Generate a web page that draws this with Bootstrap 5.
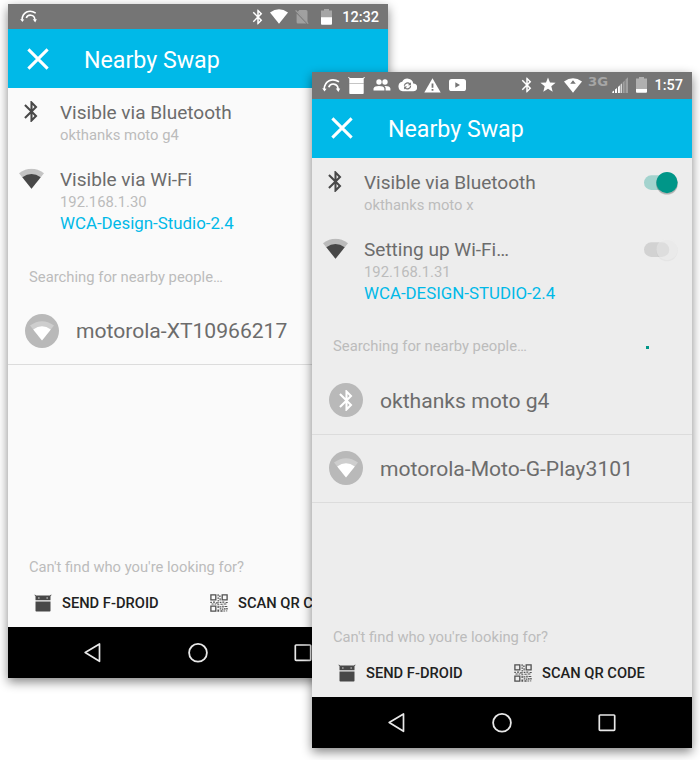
<!DOCTYPE html>
<html lang="en">
<head>
<meta charset="utf-8">
<title>Nearby Swap</title>
<link href="https://cdn.jsdelivr.net/npm/bootstrap@5.3.0/dist/css/bootstrap.min.css" rel="stylesheet">
<style>
body{font-family:Roboto,sans-serif;width:700px;height:760px;overflow:hidden;background:#fff;line-height:1}
svg{display:block;flex:none}
.phone{width:380px;box-shadow:0 4px 10px rgba(0,0,0,.48)}
.phone-a{left:8px;top:4px;height:674px;background:#fafafa}
.phone-b{left:312px;top:72px;height:676px;background:#ededed}
.status{background:#757575;color:#fff;height:25.3px}
.phone-b .status{height:26.8px}
.status-end{padding-right:9px}
.status-start{padding-left:7px}
.clock{font-size:14.5px;font-weight:500;margin-left:1.5px;padding-top:2.500px}
.phone-a .clock{margin-left:4px}
.cell{display:flex;justify-content:center;flex:none}
.w20{width:20px}.w21{width:21px}.w23{width:23px}.w25{width:25.2px}.w26{width:26px}.w28{width:28px}
.net{font:700 12px/1 "DejaVu Sans",sans-serif;color:#a6a6a6;padding-bottom:7px}
.net b{transform:scaleX(1.1)}
.appbar{background:#00b9e8;height:59.2px;padding-left:19px;color:#fff}
.appbar h1{font-size:23.2px;font-weight:400;margin:3px 0 0 35px;line-height:1}
.setting{padding-left:11px}
.setting .ico{width:25px;margin-right:16px}
.bt-row{height:67px;padding-top:11px}
.wifi-row{height:89px;padding-top:11px}
.name{font-size:19.05px;line-height:27px;color:#6c6c6c}
.detail{font-size:14.8px;line-height:18px;color:#bcbcbc}
.ssid{font-size:16.85px;line-height:25px;color:#00b9e8}
.hint{font-size:14.82px;line-height:20px;color:#bcbcbc;padding-left:21px}
.search{height:52.6px;padding-top:22.4px}
.mt-auto.hint{font-size:14.75px}
.peer{height:68.2px;border-bottom:1px solid #dcdcdc;padding-left:17px}
.peer .who{font-size:21.1px;color:#6c6c6c;margin-left:17px}
.disc{width:34px;height:34px;background:#b9b9b9}
.act{font-size:14.7px;font-weight:500;color:#212121;margin-left:10px;padding-top:1px}
.acts{height:50px;padding-left:26px;padding-top:1px}
.acts .one{width:176px}
.navkeys{background:#000;height:50.7px;padding:0 75px 0 75px}
.toggle{right:14px;width:36px;height:26px}
.dot{right:43px;top:32.2px;width:3px;height:3px;background:#009688}
</style>
<script src="https://cdn.jsdelivr.net/npm/bootstrap@5.3.0/dist/js/bootstrap.bundle.min.js"></script>
</head>
<body class="position-relative">
<svg width="0" height="0" class="position-absolute" aria-hidden="true">
  <symbol id="bt" viewBox="0 0 24 24"><path fill="currentColor" d="M17.71 7.71L12 2h-1v7.59L6.41 5 5 6.41 10.59 12 5 17.59 6.41 19 11 14.41V22h1l5.71-5.71-4.3-4.29 4.3-4.29zM13 5.83l1.88 1.88L13 9.59V5.83zm1.88 10.46L13 18.17v-3.76l1.88 1.88z"/></symbol>
  <symbol id="wifi" viewBox="0 0 24 20"><path fill="currentColor" opacity=".3" d="M0 4.5Q12-4 24 4.5L12 19.5z"/><path fill="currentColor" d="M3.2 8.4Q12 2 20.8 8.4L12 19.5z"/></symbol>
  <symbol id="swap" viewBox="18 8 20 17"><g fill="none" stroke="#fff" stroke-width="1.7"><path d="M20.2 20C20.6 12 28 8.3 35 12.8"/><path d="M24.8 18.2C26 13.8 33.8 13.6 34.1 20"/></g><path fill="#fff" d="M18.2 19.3l4.4.4-2.1 2.8zM31.8 19.6h4.4l-1.8 3.4z"/></symbol>
  <symbol id="cross" viewBox="0 0 24 24"><path d="M1.500 1.500l21 21M22.500 1.500L1.500 22.500" stroke="#fff" stroke-width="3.300"/></symbol>
  <symbol id="droid" viewBox="0 0 18 18"><path fill="currentColor" fill-rule="evenodd" d="M.8.6l1.3 1h13.8l1.3-1 .3.4-1 1.2v4H1.5v-4L.5 1zM4.2 3.5v1.1h1.3V3.5zm8.3 0v1.1h1.3V3.5zM1.5 7.4h15v9.3q0 .8-.8.8H2.3q-.8 0-.8-.8z"/></symbol>
  <symbol id="qr" viewBox="0 0 18 18"><g fill="none" stroke="#4f4f4f" stroke-width="1.3"><path d="M.9.9h4.9v4.9H.9zM12.2.9h4.9v4.9h-4.9zM.9 12.2h4.9v4.9H.9z"/></g><path fill="#555" d="M7.5.3h1.2v2H7.5zM9.2 1.5h1.4v1.6H9.2zM7.4 3.4h1.7v1.4H7.4zM9.5 4.3h1.2v2.3H9.5zM7.6 6h1.2v1.6H7.6zM.3 7.8h1.6v1.1H.3zM3 7.6h2.1v1.2H3zM6 8.2h2.8v1.3H6zM9.7 7.8h1.7v1.3H9.7zM12.3 7.6h2v1.2h-2zM15.6 7.9h2.1v1.1h-2.1zM1.5 9.5h2.2v1H1.5zM4.6 9.4h1.5v1.2H4.6zM7.3 10.2h2v1h-2zM10.4 9.7h2.3v1.1h-2.3zM13.6 9.5h2.8v1.1h-2.8zM7.5 12h1.3v2H7.5zM9.4 12.3h2v1.2h-2zM12.2 11.7h1.5v1.8h-1.5zM14.5 12h2.8v1.1h-2.8zM9.8 14.3h1.4v1.3H9.8zM7.4 15.4h1.8v2.3H7.4zM11.8 14.4h1.6v1.4h-1.6zM14.2 14h1.3v1.8h-1.3zM16.2 14h1.5v1.6h-1.5zM10.4 16.3h2.2v1.4h-2.2zM13.4 16.4h1.8v1.2h-1.8zM16.3 16.3h.9v1.1h-.9z"/></symbol>
  <symbol id="back" viewBox="0 0 20 20"><path d="M2.200 9.500L16.500.900v17.400z" fill="none" stroke="#e8e8e8" stroke-width="1.7" stroke-linejoin="round"/></symbol>
  <symbol id="home" viewBox="0 0 20 20"><circle cx="10" cy="9.800" r="8.9" fill="none" stroke="#e8e8e8" stroke-width="1.8"/></symbol>
  <symbol id="recent" viewBox="0 0 20 20"><rect x="2.3" y="2" width="15.4" height="15.4" rx=".8" fill="none" stroke="#e8e8e8" stroke-width="1.7"/></symbol>
</svg>

<section class="phone phone-a position-absolute d-flex flex-column">
  <div class="status d-flex align-items-center justify-content-between">
    <div class="d-flex status-start ps-2 ms-1"><svg width="18.500" height="17"><use href="#swap"/></svg></div>
    <div class="status-end d-flex align-items-center">
      <span class="cell w23"><svg width="18" height="18"><use href="#bt"/></svg></span>
      <span class="cell w20"><svg width="18" height="15" viewBox="0 0 18 15"><path fill="#fff" d="M0 3.5Q9-3 18 3.5L9 14.7z"/></svg></span>
      <span class="cell w26"><svg width="14" height="16" viewBox="0 0 14 16"><path fill="#a0a0a0" d="M4.3 1H11q1.5 0 1.5 1.5v11L2.6 3zM1.6 4.6l9.8 10H3q-1.4 0-1.4-1.4z"/><path d="M.6 1.3l12.6 13.3" stroke="#a0a0a0" stroke-width="1.2"/></svg></span>
      <span class="cell w23"><svg width="11" height="16" viewBox="0 0 11 16"><path fill="#a6a6a6" d="M3 0h5v1.6h3V9H0V1.6h3z"/><path fill="#fff" d="M0 8.3h11v6.5q0 .9-.9.9H.9q-.9 0-.9-.9z"/></svg></span>
      <span class="clock">12:32</span>
    </div>
  </div>
  <header class="appbar d-flex align-items-center"><svg width="22" height="22"><use href="#cross"/></svg><h1>Nearby Swap</h1></header>
  <div class="setting bt-row d-flex">
    <div class="ico"><svg width="25" height="25" color="#484848"><use href="#bt"/></svg></div>
    <div><div class="name">Visible via Bluetooth</div><div class="detail">okthanks moto g4</div></div>
  </div>
  <div class="setting wifi-row d-flex">
    <div class="ico"><svg width="25" height="25" viewBox="0 -2.4 24 24" color="#484848"><use href="#wifi" width="24" height="20"/></svg></div>
    <div><div class="name">Visible via Wi-Fi</div><div class="detail">192.168.1.30</div><div class="ssid">WCA-Design-Studio-2.4</div></div>
  </div>
  <div class="hint search">Searching for nearby people…</div>
  <div class="peer d-flex align-items-center">
    <div class="disc rounded-circle d-flex align-items-center justify-content-center text-white"><svg width="24" height="20"><use href="#wifi"/></svg></div>
    <span class="who">motorola-XT10966217</span>
  </div>
  <div class="hint mt-auto">Can't find who you're looking for?</div>
  <div class="acts d-flex align-items-center">
    <div class="one d-flex align-items-center"><svg width="18" height="18" color="#484848"><use href="#droid"/></svg><span class="act">SEND F-DROID</span></div>
    <div class="d-flex align-items-center"><svg width="18" height="18"><use href="#qr"/></svg><span class="act">SCAN QR CODE</span></div>
  </div>
  <nav class="navkeys d-flex align-items-center justify-content-between"><svg width="20" height="20"><use href="#back"/></svg><svg width="20" height="20"><use href="#home"/></svg><svg width="20" height="20"><use href="#recent"/></svg></nav>
</section>

<section class="phone phone-b position-absolute d-flex flex-column">
  <div class="status d-flex align-items-center justify-content-between">
    <div class="status-start d-flex align-items-center">
      <span class="cell w25"><svg width="20" height="17"><use href="#swap"/></svg></span>
      <span class="cell w25"><svg width="17" height="17" viewBox="0 0 17 17"><path fill="#fff" d="M.5 0l1.7 1h12.6l1.7-1 .5.6-1.3 1.2v4.4H1.3V1.8L0 .6zM1.3 6.8h14.4v9.4q0 .8-.8.8H2.1q-.8 0-.8-.8z"/><path stroke="#ccc" stroke-width=".6" d="M1.3 6.5h14.4"/></svg></span>
      <span class="cell w25"><svg width="18" height="12" viewBox="0 0 18 12"><g fill="#fff"><circle cx="6" cy="3" r="2.7"/><circle cx="12" cy="3" r="2.7"/><path d="M.5 11.5V9.4Q1.5 7 6 7t5.4 2.4v2.1zM12.6 11.5V9q-.3-1.2-1.3-1.9Q16.500 6.800 17.400 9.400v2.100z"/></g></svg></span>
      <span class="cell w25"><svg width="19" height="14" viewBox="0 0 24 17"><path fill="#fff" d="M19.300 6.500A7.500 7.500 0 0 0 5.300 4.500 6.100 6.100 0 0 0 6 16.500h13a5 5 0 0 0 .3-10z"/><path fill="none" stroke="#757575" stroke-width="1.500" d="M8 9.500a4 4 0 0 1 7-2.200M16 9.500a4 4 0 0 1-7 2.500"/><path fill="#757575" d="M16.300 5v3.800h-3.800zM7.700 14.200v-3.800h3.800z"/></svg></span>
      <span class="cell w25"><svg width="17" height="15" viewBox="0 0 17 15"><path fill="#fff" d="M8.500.3L16.700 14.500H.3z"/><path fill="#757575" d="M7.600 5.500h1.800v4.200H7.600zm0 5.500h1.800v1.800H7.600z"/></svg></span>
      <span class="cell w25"><svg width="17" height="12" viewBox="0 0 17 12"><rect width="17" height="12" rx="2.600" fill="#fff"/><path fill="#757575" d="M6.300 3.300v5.400L11 6z"/></svg></span>
    </div>
    <div class="status-end d-flex align-items-center">
      <span class="cell w21"><svg width="18" height="18"><use href="#bt"/></svg></span>
      <span class="cell w21"><svg width="16" height="16" viewBox="0 0 16 16"><path fill="#fff" d="M8 .5l2 5 5.600.300-4.300 3.500 1.400 5.500L8 11.800l-4.700 3 1.400-5.500L.4 5.800 6 5.500z"/></svg></span>
      <span class="cell w28"><svg width="18" height="15" viewBox="0 0 18 15"><path fill="#fff" d="M0 3.500Q9-3 18 3.500L9 14.700z"/><path fill="#757575" d="M9 2.200l2.800 3.600H6.200z"/></svg></span>
      <span class="cell w23 net"><b>3G</b></span>
      <span class="cell w20"><svg width="16" height="16" viewBox="0 0 16 16"><path fill="#fff" d="M.3 16v-1.200l1.700-1.300V16zM3 16v-3.500l2-1.600V16zM6 16V9.900l1.900-1.600V16z"/><path fill="#d8d8d8" d="M8.500 16V7.700L10 6.200V16z"/><path fill="#a0a0a0" d="M10.700 16V5.400l2-2V16zM13.500 16V2.500L16 .3V16z"/></svg></span>
      <span class="cell w23"><svg width="11" height="16" viewBox="0 0 11 16"><path fill="#b0b0b0" d="M3 0h5v1.600h3V12H0V1.600h3z"/><path fill="#fff" d="M0 12h11v2.800q0 .9-.9.900H.9q-.9 0-.9-.9z"/></svg></span>
      <span class="clock">1:57</span>
    </div>
  </div>
  <header class="appbar d-flex align-items-center"><svg width="22" height="22"><use href="#cross"/></svg><h1>Nearby Swap</h1></header>
  <div class="setting bt-row d-flex position-relative">
    <div class="ico"><svg width="25" height="25" color="#484848"><use href="#bt"/></svg></div>
    <div><div class="name">Visible via Bluetooth</div><div class="detail">okthanks moto x</div></div>
    <svg class="toggle position-absolute" viewBox="0 0 36 26"><rect x="2" y="6.300" width="27" height="14.700" rx="7.300" fill="#a3d3ce"/><circle cx="25" cy="15" r="10.800" fill="#000" opacity=".12"/><circle cx="25" cy="14.500" r="10.800" fill="#000" opacity=".15"/><circle cx="25" cy="13.600" r="10.600" fill="#009688"/></svg>
  </div>
  <div class="setting wifi-row d-flex position-relative">
    <div class="ico"><svg width="25" height="25" viewBox="0 -2.4 24 24" color="#484848"><use href="#wifi" width="24" height="20"/></svg></div>
    <div><div class="name">Setting up Wi-Fi…</div><div class="detail">192.168.1.31</div><div class="ssid">WCA-DESIGN-STUDIO-2.4</div></div>
    <svg class="toggle position-absolute" viewBox="0 0 36 26"><rect x="2" y="6.300" width="25.300" height="14.700" rx="7.300" fill="#d2d2d2"/><circle cx="25" cy="14.500" r="10.800" fill="#000" opacity=".03"/><circle cx="25" cy="13.600" r="10.600" fill="#f0f0f0" opacity=".5"/></svg>
  </div>
  <div class="hint search position-relative">Searching for nearby people…<i class="dot position-absolute"></i></div>
  <div class="peer d-flex align-items-center">
    <div class="disc rounded-circle d-flex align-items-center justify-content-center text-white"><svg width="25" height="25"><use href="#bt"/></svg></div>
    <span class="who">okthanks moto g4</span>
  </div>
  <div class="peer d-flex align-items-center">
    <div class="disc rounded-circle d-flex align-items-center justify-content-center text-white"><svg width="24" height="20"><use href="#wifi"/></svg></div>
    <span class="who">motorola-Moto-G-Play3101</span>
  </div>
  <div class="hint mt-auto">Can't find who you're looking for?</div>
  <div class="acts d-flex align-items-center">
    <div class="one d-flex align-items-center"><svg width="18" height="18" color="#484848"><use href="#droid"/></svg><span class="act">SEND F-DROID</span></div>
    <div class="d-flex align-items-center"><svg width="18" height="18"><use href="#qr"/></svg><span class="act">SCAN QR CODE</span></div>
  </div>
  <nav class="navkeys d-flex align-items-center justify-content-between"><svg width="20" height="20"><use href="#back"/></svg><svg width="20" height="20"><use href="#home"/></svg><svg width="20" height="20"><use href="#recent"/></svg></nav>
</section>
</body>
</html>
